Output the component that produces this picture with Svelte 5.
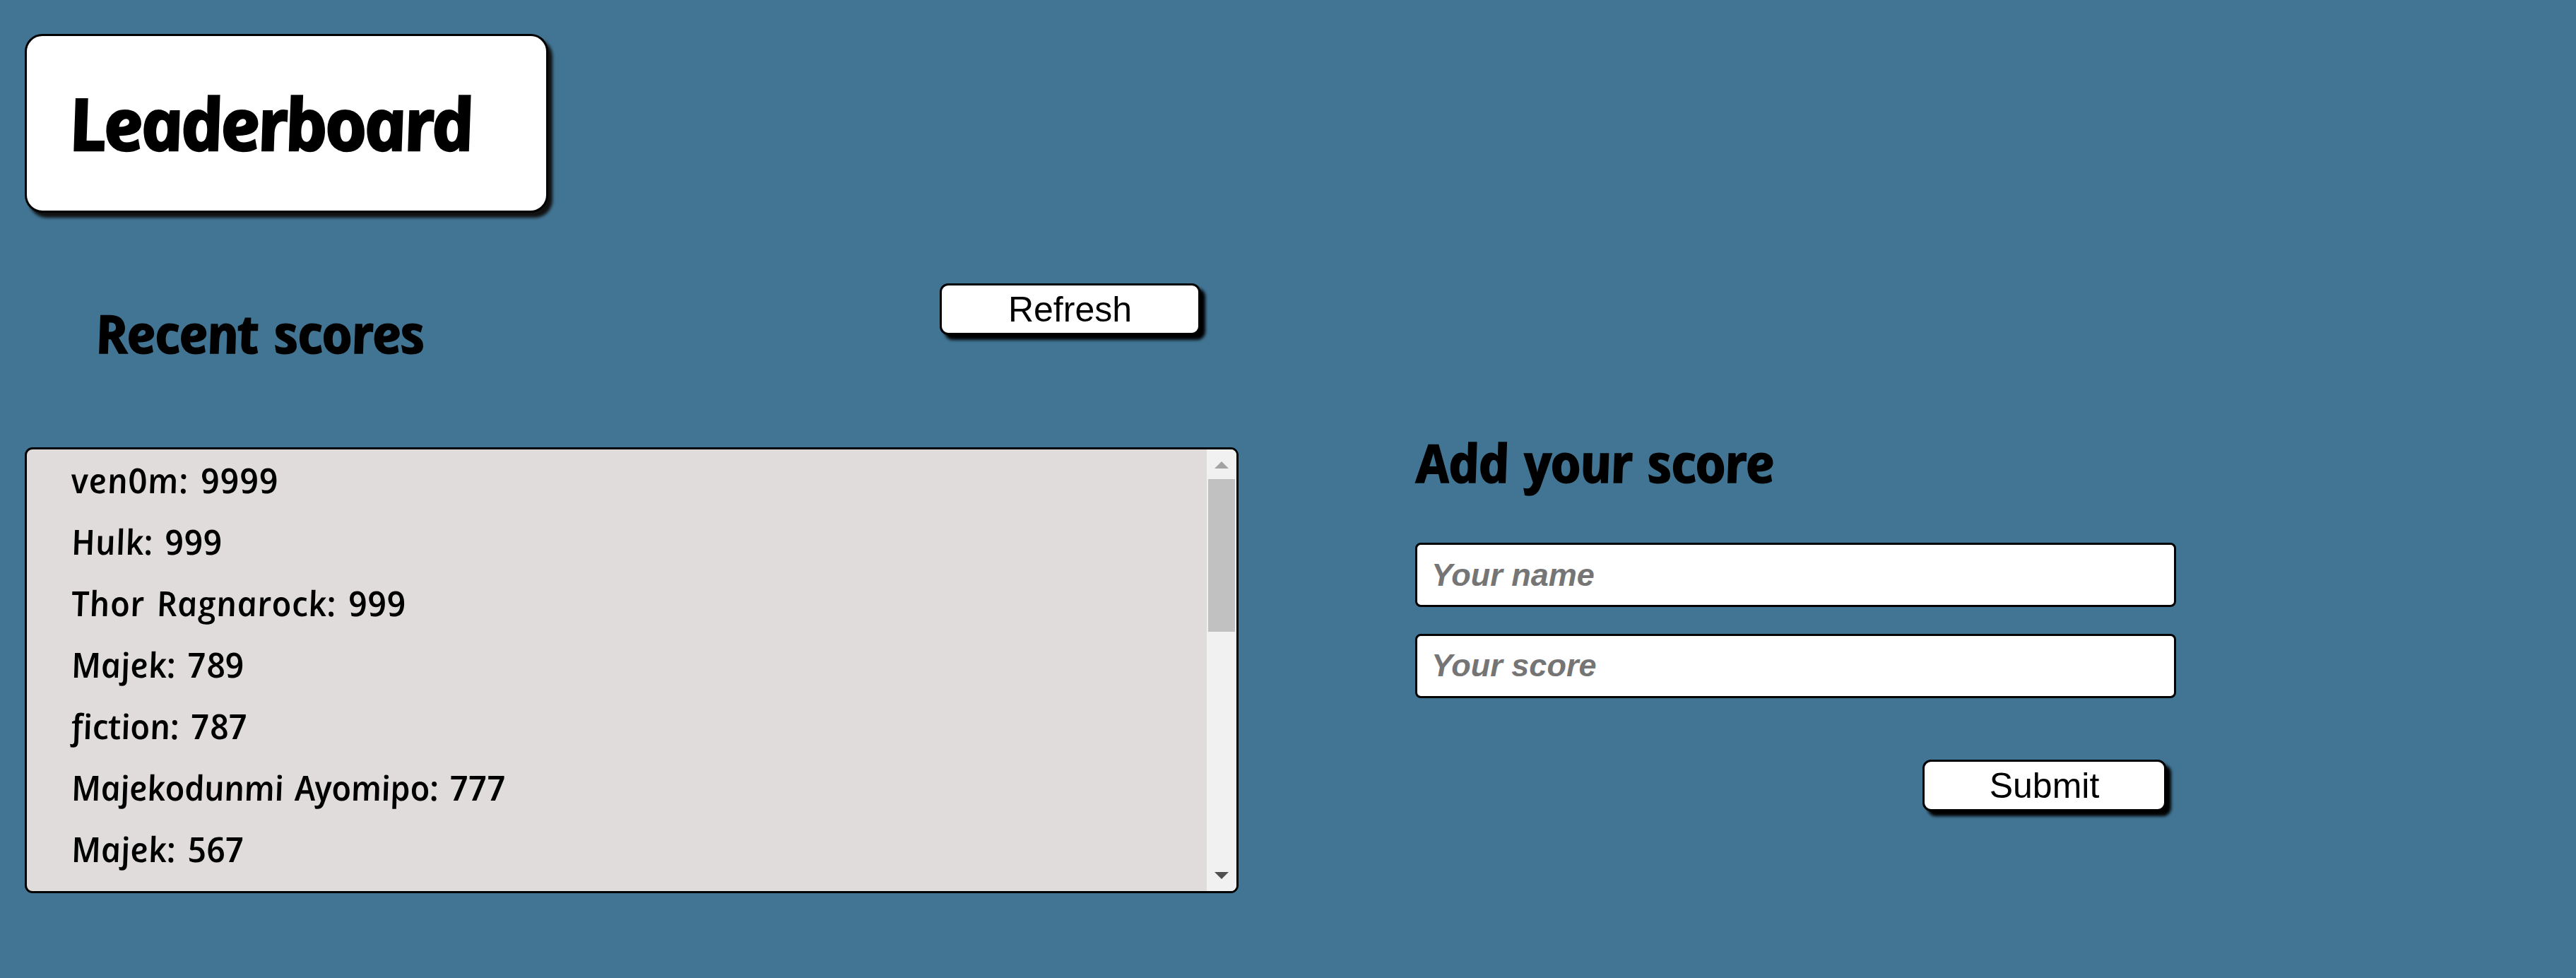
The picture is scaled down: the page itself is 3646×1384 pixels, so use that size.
<script>
  // tracking is the letter spacing of the row, in px
  const scores = [
    { user: 'ven0m', score: 9999, tracking: 0.6 },
    { user: 'Hulk', score: 999, tracking: 0.1 },
    { user: 'Thor Ragnarock', score: 999, tracking: 0.35 },
    { user: 'Majek', score: 789, tracking: -0.2 },
    { user: 'fiction', score: 787, tracking: -0.3 },
    { user: 'Majekodunmi Ayomipo', score: 777, tracking: -0.65 },
    { user: 'Majek', score: 567, tracking: -0.2 },
  ];
</script>

<div class="page">
  <header class="title-card">
    <h1 class="hand">Leaderboard</h1>
  </header>

  <main>
    <section class="recent">
      <div class="toolbar">
        <h2 class="hand">Recent scores</h2>
        <button type="button" class="refresh">Refresh</button>
      </div>
      <div class="board">
        <ul>
          {#each scores as row}
            <li><span class="hand" style:letter-spacing="{row.tracking}px">{row.user}: {row.score}</span></li>
          {/each}
        </ul>
        <div class="scrollbar">
          <svg class="arrow" viewBox="0 0 20 10"><path d="M10 0 20 10H0Z" fill="#a3a3a3" /></svg>
          <div class="thumb"></div>
          <svg class="arrow down" viewBox="0 0 20 10"><path d="M0 0H20L10 10Z" fill="#505050" /></svg>
        </div>
      </div>
    </section>

    <form class="add">
      <h2 class="hand">Add your score</h2>
      <input type="text" placeholder="Your name" />
      <input type="text" placeholder="Your score" class="score" />
      <button type="button" class="submit">Submit</button>
    </form>
  </main>
</div>

<style>
  :global(body) {
    margin: 0;
    background: #427594;
  }

  .page {
    box-sizing: border-box;
    width: 100%;
    height: 1384px;
    padding: 48px 35px 0;
    overflow: hidden;
    color: #000;
    font-family: 'Liberation Sans', Arial, sans-serif;
  }

  .hand {
    display: inline-block;
    margin: 0;
    font-family: 'Open Sans', 'Noto Sans', sans-serif;
    font-style: italic;
    white-space: nowrap;
    transform: skewX(10deg);
  }

  .title-card {
    box-sizing: border-box;
    width: 741px;
    height: 253px;
    padding: 61px 0 0 58px;
    background: #fff;
    border: 3px solid #000;
    border-radius: 25px;
    box-shadow: 6px 7px 4px #111;
  }

  h1 {
    font-size: 102px;
    line-height: 124px;
    font-weight: 750;
    letter-spacing: -4.2px;
    -webkit-text-stroke: 2.5px #000;
  }

  main {
    display: flex;
    align-items: flex-start;
    gap: 250px;
  }

  .recent {
    width: 1718px;
    padding-top: 100px;
  }

  .toolbar {
    display: flex;
    justify-content: space-between;
    align-items: flex-start;
    height: 232px;
    padding: 0 54px 0 99px;
  }

  h2 {
    font-size: 75px;
    line-height: 100px;
    font-weight: 750;
    letter-spacing: -2px;
    word-spacing: 5px;
    -webkit-text-stroke: 1.5px #000;
  }

  .toolbar h2 {
    margin-top: 20px;
  }

  button {
    box-sizing: border-box;
    height: 73px;
    padding: 0;
    background: #fff;
    border: 3px solid #000;
    border-radius: 12px;
    box-shadow: 7px 7px 4px #000;
    color: #000;
    font: 50px/60px 'Liberation Sans', Arial, sans-serif;
  }

  .refresh {
    width: 369px;
  }

  .board {
    box-sizing: border-box;
    display: flex;
    height: 631px;
    overflow: hidden;
    background: #e0dcdb;
    border: 3px solid #000;
    border-radius: 11px;
  }

  ul {
    flex: 1;
    margin: 0;
    padding: 0 0 0 62px;
    list-style: none;
  }

  li {
    height: 87px;
    font-size: 49px;
    line-height: 87px;
    font-weight: 600;
    word-spacing: 4px;
  }

  .scrollbar {
    display: flex;
    flex-direction: column;
    align-items: center;
    width: 42px;
    background: #f1f1f1;
  }

  .arrow {
    display: block;
    width: 20px;
    height: 10px;
    margin: 17px 0 15px;
  }

  .thumb {
    width: 38px;
    height: 216px;
    background: #c1c1c1;
  }

  .arrow.down {
    margin: auto 0 17px;
  }

  .add {
    display: flex;
    flex-direction: column;
    align-items: flex-start;
    width: 1077px;
    padding-top: 303px;
  }

  .add h2 {
    margin-bottom: 64px;
  }

  input {
    box-sizing: border-box;
    width: 100%;
    height: 91px;
    margin: 0 0 38px;
    padding: 0 20px;
    background: #fff;
    border: 3px solid #000;
    border-radius: 8px;
    font: italic bold 45px 'Liberation Sans', Arial, sans-serif;
  }

  input.score {
    padding-bottom: 2px;
  }

  input::placeholder {
    color: #757575;
    opacity: 1;
  }

  .submit {
    width: 345px;
    margin: 49px 14px 0 0;
    align-self: flex-end;
  }
</style>
